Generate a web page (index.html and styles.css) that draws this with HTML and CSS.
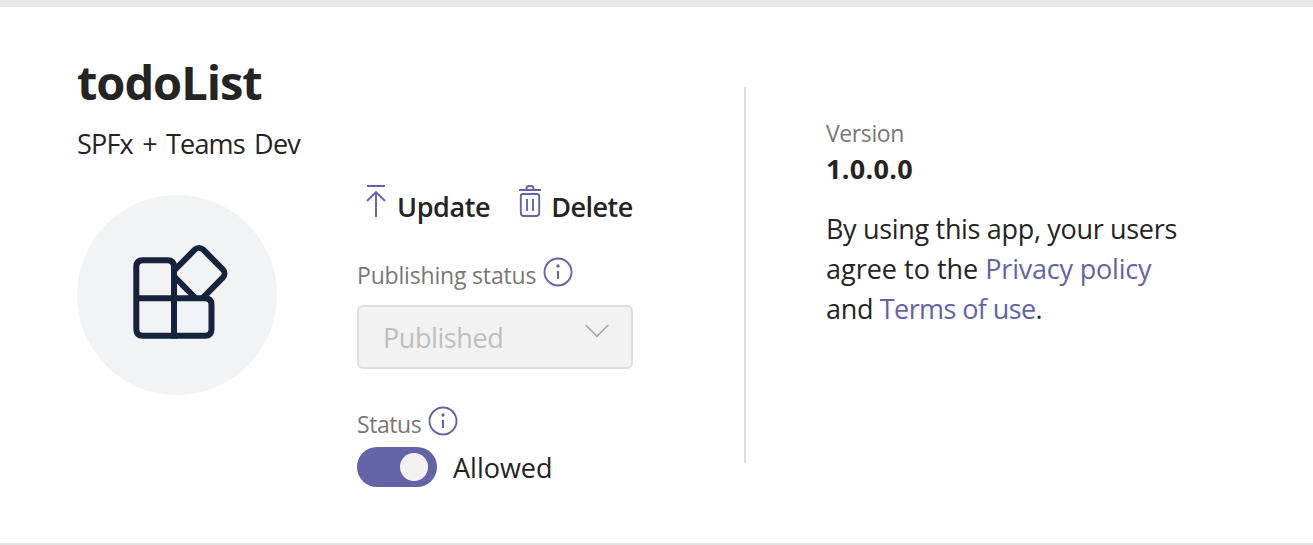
FILE: index.html
```html
<!DOCTYPE html>
<html lang="en">
<head>
<meta charset="utf-8">
<title>todoList</title>
<link rel="stylesheet" href="styles.css">
</head>
<body>
<main class="card">
  <section class="app">
    <h1 class="title">todoList</h1>
    <p class="publisher">SPFx + Teams Dev</p>
    <div class="details">
      <div class="avatar">
        <svg width="200" height="200" viewBox="0 0 200 200" fill="#f2f3f5" stroke="#16233d" stroke-width="6">
          <rect x="102.200" y="58.700" width="39.600" height="39.600" rx="6" transform="rotate(45 122 78.500)"/>
          <path d="M97 103.300h31q6.500 0 6.500 6.500v24.400q0 6.500-6.500 6.500H97Z"/>
          <path d="M97 140.700V71.800q0-6.500-6.500-6.500H65.800q-6.500 0-6.500 6.500v62.400q0 6.500 6.500 6.500ZM59.300 103.300H97"/>
        </svg>
      </div>
      <div class="controls">
        <div class="actions">
          <button class="action">
            <svg width="20" height="34" viewBox="0 0 20 34" fill="none" stroke="#6264a7" stroke-width="1.900"><path d="M1 2h18M10 33V8M1 17l9-9 9 9"/></svg>
            <span class="update">Update</span>
          </button>
          <button class="action">
            <svg width="22" height="34" viewBox="0 0 22 34" fill="none" stroke="#6264a7" stroke-width="1.900"><path d="M0 6h22M7.500 6V4.500q0-2.500 2.500-2.500h2q2.500 0 2.500 2.500V6M4 10h14q2.200 0 2.200 2.200V29q0 3-3.200 3H5q-3.200 0-3.200-3V12.200Q1.800 10 4 10ZM8 15v12M14 15v12"/></svg>
            <span class="delete">Delete</span>
          </button>
        </div>
        <div class="label publishing"><span>Publishing status</span>
          <svg class="info" width="30" height="30" viewBox="0 0 30 30"><circle cx="15" cy="15" r="13.500" fill="none" stroke="#6264a7" stroke-width="1.900"/><circle cx="15" cy="9" r="1.700" fill="#6264a7"/><path d="M15 14v8" stroke="#6264a7" stroke-width="2"/></svg>
        </div>
        <div class="select"><span>Published</span>
          <svg width="24" height="14" viewBox="0 0 24 14" fill="none" stroke="#a6a6a6" stroke-width="1.700"><path d="M.7 1l11.300 11.300L23.300 1"/></svg>
        </div>
        <div class="label status"><span>Status</span>
          <svg class="info" width="30" height="30" viewBox="0 0 30 30"><circle cx="15" cy="15" r="13.500" fill="none" stroke="#6264a7" stroke-width="1.900"/><circle cx="15" cy="9" r="1.700" fill="#6264a7"/><path d="M15 14v8" stroke="#6264a7" stroke-width="2"/></svg>
        </div>
        <div class="allow"><div class="toggle"><i class="knob"></i></div><span>Allowed</span></div>
      </div>
    </div>
  </section>
  <aside class="about">
    <div class="version-label">Version</div>
    <div class="version">1.0.0.0</div>
    <p class="terms"><span class="lead">By using this app, your users</span><br>agree to the <a class="privacy">Privacy policy</a><br><span class="lead">and </span><a class="use">Terms of use</a>.</p>
  </aside>
</main>
</body>
</html>
```
FILE: styles.css
```css
* { box-sizing: border-box; }
body {
  margin: 0;
  height: 545px;
  padding: 7px 0 2px;
  overflow: hidden;
  background: linear-gradient(#ebeae9, #e5e4e3 7px, #e2e2e2);
  color: #252423;
  font: 27px/40px "Open Sans", "Noto Sans", sans-serif;
}
h1, p { margin: 0; }
.card {
  display: flex;
  height: 536px;
  padding-left: 77px;
  background: #fff;
}
.app { width: 667px; padding-top: 43px; }
.title { font-size: 47px; line-height: 64px; font-weight: 700; letter-spacing: -1.050px; }
.publisher { margin-top: 10px; letter-spacing: -.8px; word-spacing: 3px; }
.details { display: flex; gap: 80px; margin-top: 19px; }
.avatar {
  width: 200px;
  height: 200px;
  margin-top: 12px;
  border-radius: 50%;
  background: #f2f3f5;
}
.avatar svg { display: block; }
.controls { width: 276px; }
.actions { display: flex; gap: 29px; height: 46px; padding: 0 0 0 9px; }
.action {
  display: flex;
  gap: 11px;
  padding: 0;
  border: 0;
  background: none;
  color: inherit;
  font: inherit;
  font-weight: 600;
}
.action svg { margin-top: 1px; flex: none; }
.action span { margin-top: 4px; }
.update { letter-spacing: -.4px; }
.delete { margin-left: -1px; letter-spacing: -.5px; }
.label {
  display: flex;
  gap: 7px;
  color: #797775;
  font-size: 23px;
  line-height: 32px;
}
.publishing { margin-top: 30px; letter-spacing: -.18px; }
.info { margin-top: -2px; }
.select {
  display: flex;
  justify-content: space-between;
  height: 64px;
  margin-top: 14px;
  padding: 10px 22px 0 24px;
  border: 2px solid #dedede;
  border-radius: 6px;
  background: #f3f2f2;
  color: #c0bfbd;
  letter-spacing: -.42px;
}
.select span { line-height: 42px; }
.select svg { margin-top: 7px; }
.status { margin-top: 39px; letter-spacing: -.45px; }
.allow { display: flex; gap: 16px; height: 40px; margin-top: 7px; line-height: 42px; }
.toggle {
  display: flex;
  justify-content: flex-end;
  width: 80px;
  height: 40px;
  padding: 6px 9px;
  border-radius: 20px;
  background: #6264a7;
}
.knob { width: 28px; height: 28px; border-radius: 50%; background: #f3f2f1; }
.about {
  height: 376px;
  margin-top: 80px;
  padding: 30px 0 0 80px;
  border-left: 2px solid #dedede;
}
.version-label { color: #797775; font-size: 23px; line-height: 32px; letter-spacing: -.4px; }
.version { font-weight: 700; letter-spacing: .3px; }
.terms { margin-top: 20px; white-space: nowrap; }
.terms a { color: #6264a7; }
.lead { letter-spacing: -.32px; }
.privacy { letter-spacing: -.2px; }
.use { letter-spacing: -.6px; }
```
